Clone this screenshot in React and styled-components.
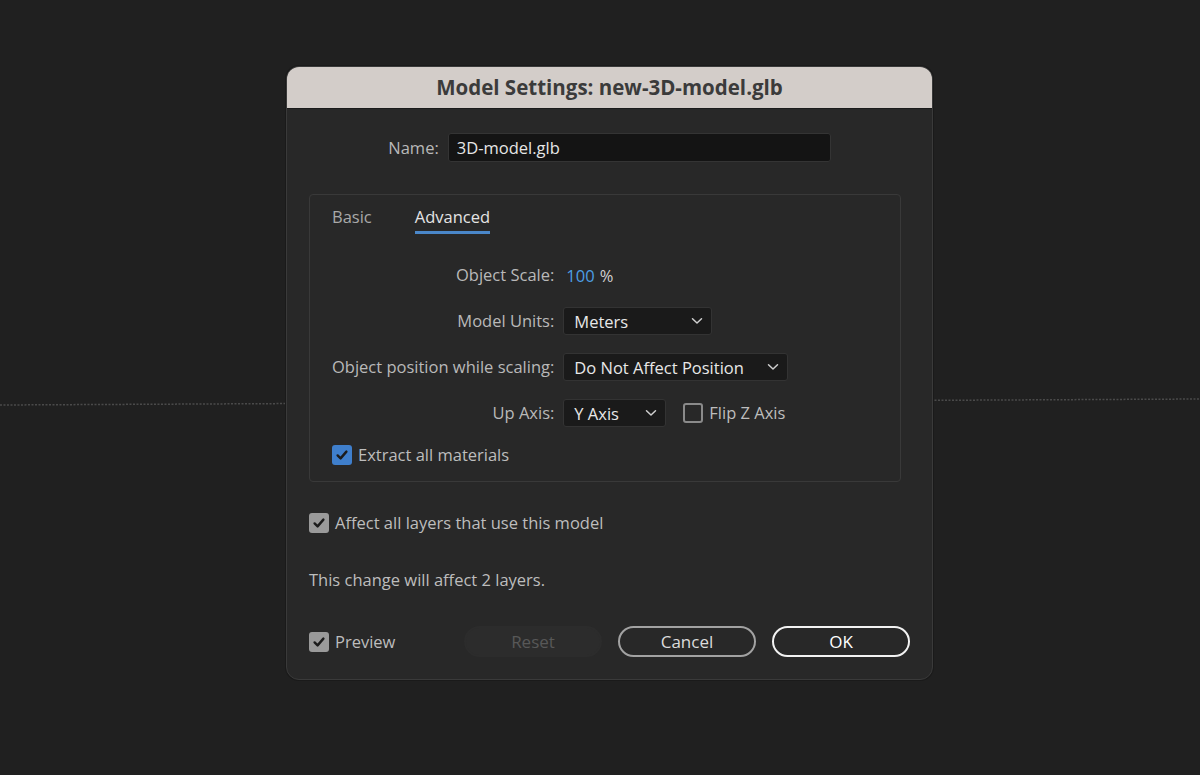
import React, { useState } from 'react';
import styled, { createGlobalStyle } from 'styled-components';

const GlobalStyle = createGlobalStyle`
  html, body {
    margin: 0;
    padding: 0;
    background: #202020;
    font-family: "Open Sans", "Noto Sans", sans-serif;
  }
`;

const Chevron = () => (
  <svg width="12" height="8" viewBox="0 0 12 8">
    <path d="M1.5 1.8 L6 6 L10.5 1.8" fill="none" stroke="#cfcfcf" strokeWidth="1.5" strokeLinecap="round" strokeLinejoin="round" />
  </svg>
);

const Check = () => (
  <svg width="14" height="14" viewBox="0 0 14 14">
    <path d="M2.6 7.4 L5.6 10.4 L11.4 3.6" fill="none" stroke="#1c1c1c" strokeWidth="2.4" strokeLinecap="round" strokeLinejoin="round" />
  </svg>
);

const CheckField = ({ checked, tone, label, onToggle }) => (
  <CheckRow onClick={onToggle}>
    <Box checked={checked} tone={tone}>{checked && <Check />}</Box>
    <span>{label}</span>
  </CheckRow>
);

const Select = ({ value, width }) => (
  <SelectBox width={width}>
    <span>{value}</span>
    <Chevron />
  </SelectBox>
);

const App = () => {
  const [tab, setTab] = useState('Advanced');
  const [flip, setFlip] = useState(false);
  const [extract, setExtract] = useState(true);
  const [affect, setAffect] = useState(true);
  const [preview, setPreview] = useState(true);

  return (
    <>
      <GlobalStyle />
      <Page>
        <Guide viewBox="0 0 1200 775" preserveAspectRatio="none">
          <line x1="0" y1="405" x2="1200" y2="399" stroke="#4a4a4a" strokeWidth="1.5" strokeDasharray="2 1.5" />
        </Guide>
        <Dialog>
          <TitleBar>Model Settings: new-3D-model.glb</TitleBar>
          <Body>
            <NameRow>
              <Label>Name:</Label>
              <NameInput defaultValue="3D-model.glb" />
            </NameRow>

            <Panel>
              <Tabs>
                {['Basic', 'Advanced'].map((t) => (
                  <Tab key={t} active={tab === t} onClick={() => setTab(t)}>
                    {t}
                  </Tab>
                ))}
              </Tabs>
              <Grid>
                <Label>Object Scale:</Label>
                <Inline>
                  <Scale>100</Scale>
                  <Value>%</Value>
                </Inline>

                <Label>Model Units:</Label>
                <Inline>
                  <Select value="Meters" width={149} />
                </Inline>

                <Label>Object position while scaling:</Label>
                <Inline>
                  <Select value="Do Not Affect Position" width={225} />
                </Inline>

                <Label>Up Axis:</Label>
                <Inline>
                  <Select value="Y Axis" width={103} />
                  <CheckField checked={flip} label="Flip Z Axis" onToggle={() => setFlip(!flip)} />
                </Inline>
              </Grid>
              <ExtractRow>
                <CheckField checked={extract} tone="blue" label="Extract all materials" onToggle={() => setExtract(!extract)} />
              </ExtractRow>
            </Panel>

            <AffectRow>
              <CheckField checked={affect} label="Affect all layers that use this model" onToggle={() => setAffect(!affect)} />
            </AffectRow>

            <Note>This change will affect 2 layers.</Note>

            <Footer>
              <CheckField checked={preview} label="Preview" onToggle={() => setPreview(!preview)} />
              <Buttons>
                <Button variant="disabled">Reset</Button>
                <Button variant="secondary">Cancel</Button>
                <Button variant="primary">OK</Button>
              </Buttons>
            </Footer>
          </Body>
        </Dialog>
      </Page>
    </>
  );
};

const Page = styled.div`
  position: relative;
  width: 1200px;
  height: 775px;
  overflow: hidden;
  padding: 66px 0 0 286px;
  box-sizing: border-box;
`;

const Guide = styled.svg`
  position: absolute;
  left: 0;
  top: 0;
  width: 1200px;
  height: 775px;
`;

const Dialog = styled.div`
  position: relative;
  width: 647px;
  height: 614px;
  box-sizing: border-box;
  background: #282828;
  border: 1px solid #3a3a3a;
  border-radius: 13px;
  overflow: hidden;
  display: flex;
  flex-direction: column;
  box-shadow: 0 0 0 1px #1a1a1a;
`;

const TitleBar = styled.div`
  height: 42px;
  flex-shrink: 0;
  background: #d3cdc9;
  border-bottom: 1px solid #1b1b1b;
  display: flex;
  align-items: center;
  justify-content: center;
  font-size: 20.5px;
  line-height: 24px;
  font-weight: 700;
  color: #3b3b3b;
  padding-bottom: 2px;
  box-sizing: border-box;
`;

const Body = styled.div`
  padding: 24px 22px 0 22px;
  display: flex;
  flex-direction: column;
`;

const Label = styled.span`
  font-size: 16.5px;
  line-height: 22px;
  color: #b9b9b9;
  text-align: right;
  white-space: nowrap;
`;

const NameRow = styled.div`
  display: flex;
  align-items: center;
  justify-content: center;
  gap: 9px;
`;

const NameInput = styled.input`
  width: 383px;
  height: 29px;
  box-sizing: border-box;
  background: #141414;
  border: 1px solid #343434;
  border-radius: 3px;
  color: #e6e6e6;
  font-family: inherit;
  font-size: 16.5px;
  padding: 0 8px;
  outline: none;
`;

const Panel = styled.div`
  margin-top: 32px;
  width: 592px;
  height: 288px;
  box-sizing: border-box;
  border: 1px solid #393939;
  border-radius: 4px;
  padding: 11px 22px 0 22px;
`;

const Tabs = styled.div`
  display: flex;
  gap: 43px;
`;

const Tab = styled.div`
  font-size: 16.5px;
  line-height: 22px;
  color: ${(p) => (p.active ? '#e4e4e4' : '#a9a9a9')};
  padding-bottom: 3px;
  border-bottom: 3px solid ${(p) => (p.active ? '#4a87c9' : 'transparent')};
  cursor: pointer;
`;

const Grid = styled.div`
  display: grid;
  grid-template-columns: auto 1fr;
  column-gap: 9px;
  grid-auto-rows: 28px;
  row-gap: 18px;
  align-items: center;
  margin-top: 27px;
`;

const Inline = styled.div`
  display: flex;
  align-items: center;
  gap: 17px;
`;

const Scale = styled.span`
  font-size: 16.5px;
  color: #4c9ee4;
  margin-left: 3px;
`;

const Value = styled.span`
  font-size: 16.5px;
  color: #d0d0d0;
  margin-left: -12px;
`;

const SelectBox = styled.div`
  width: ${(p) => p.width}px;
  height: 28px;
  box-sizing: border-box;
  background: #1a1a1a;
  border: 1px solid #333;
  border-radius: 3px;
  display: flex;
  align-items: center;
  justify-content: space-between;
  padding: 0 8px 0 10px;
  font-size: 16.5px;
  color: #e8e8e8;
`;

const CheckRow = styled.div`
  display: flex;
  align-items: center;
  gap: 6px;
  font-size: 16.5px;
  line-height: 22px;
  color: #bdbdbd;
  cursor: pointer;
`;

const Box = styled.div`
  width: 20px;
  height: 20px;
  box-sizing: border-box;
  border-radius: 3px;
  display: flex;
  align-items: center;
  justify-content: center;
  background: ${(p) => (!p.checked ? 'transparent' : p.tone === 'blue' ? '#3f7fcc' : '#9a9a9a')};
  border: ${(p) => (p.checked ? 'none' : '2px solid #8a8a8a')};
`;

const ExtractRow = styled.div`
  margin-top: 17px;
`;

const AffectRow = styled.div`
  margin-top: 30px;
`;

const Note = styled.div`
  margin-top: 35px;
  font-size: 16.5px;
  line-height: 22px;
  color: #bdbdbd;
`;

const Footer = styled.div`
  margin-top: 35px;
  display: flex;
  align-items: center;
  justify-content: space-between;
`;

const Buttons = styled.div`
  display: flex;
  gap: 16px;
`;

const Button = styled.button`
  width: 138px;
  height: 31px;
  box-sizing: border-box;
  border-radius: 16px;
  font-family: inherit;
  font-size: 17px;
  padding: 0;
  background: ${(p) => (p.variant === 'disabled' ? '#2c2c2c' : 'transparent')};
  color: ${(p) => (p.variant === 'disabled' ? '#585858' : p.variant === 'primary' ? '#ffffff' : '#dcdcdc')};
  border: 2px solid
    ${(p) => (p.variant === 'disabled' ? '#2c2c2c' : p.variant === 'primary' ? '#f2f2f2' : '#a2a2a2')};
  cursor: pointer;
`;

export default App;
